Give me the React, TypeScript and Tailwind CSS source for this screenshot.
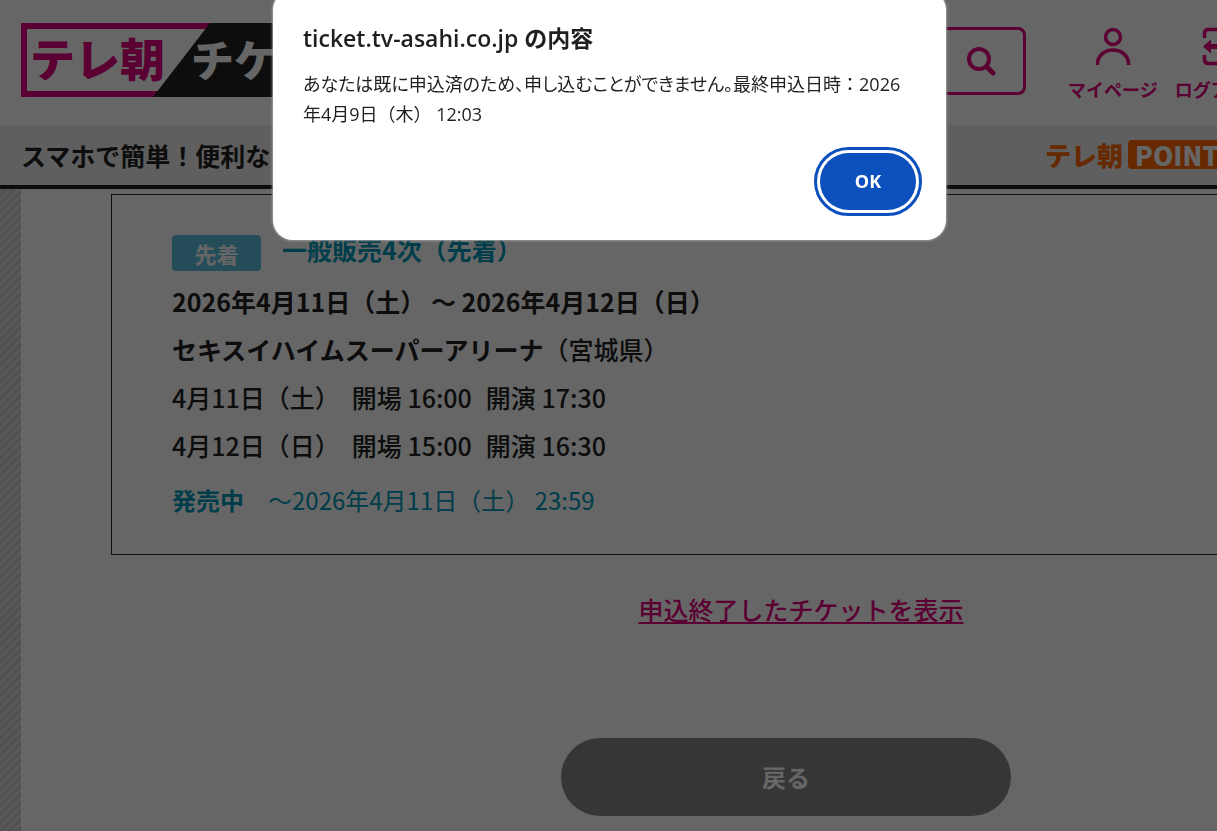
import React from 'react'

const schedules = [
  { day: '4月11日（土）', open: '16:00', start: '17:30' },
  { day: '4月12日（日）', open: '15:00', start: '16:30' },
]

function Logo() {
  return (
    <svg width="360" height="74" viewBox="0 0 360 74" role="img" aria-label="テレ朝チケット" className="shrink-0">
      <rect x="3" y="3" width="300" height="68" fill="#fff" stroke="#e4007f" strokeWidth="6" />
      <path d="M189 0H360V74H132Z" fill="#222" />
      <g fontFamily="'Noto Sans CJK JP', sans-serif" fontWeight="900">
        <text x="9" y="54" fontSize="45" fill="#e4007f">テレ朝</text>
        <text x="170" y="54" fontSize="43" fill="#fff">チケット</text>
      </g>
    </svg>
  )
}

function SearchIcon() {
  return (
    <svg width="30" height="30" viewBox="0 0 30 30" fill="none" stroke="#e4007f" strokeLinecap="round">
      <circle cx="12" cy="13" r="10" strokeWidth="4" />
      <path d="M20 21L26 27" strokeWidth="5" />
    </svg>
  )
}

function UserIcon() {
  return (
    <svg width="40" height="40" viewBox="0 0 40 40" fill="none" stroke="#e4007f" strokeWidth="3.500">
      <circle cx="20" cy="11" r="7.500" />
      <path d="M4.500 39V38C4.500 29.500 11.500 24 20 24S35.500 29.500 35.500 38V39" />
    </svg>
  )
}

function LogoutIcon() {
  return (
    <svg width="40" height="40" viewBox="0 0 40 40" fill="none" stroke="#e4007f" strokeWidth="3.500">
      <path d="M4.500 12V7.500Q4.500 3.500 8.500 3.500H31.500Q35.500 3.500 35.500 7.500V33.500Q35.500 37.500 31.500 37.500H8.500Q4.500 37.500 4.500 33.500V29" />
      <path d="M9 20.500H26" strokeWidth="5" />
      <path d="M3 20.500L11 13.500V27.500Z" fill="#e4007f" stroke="none" />
    </svg>
  )
}

function Header() {
  return (
    <header className="border-b-4 border-[#222] bg-white">
      <div className="flex h-[125px] items-start pl-[21px]">
        <div className="pt-[23px]"><Logo /></div>
        <form className="ml-[60px] mt-[27px] flex h-[68px] w-[585px] items-center rounded-lg border-3 border-[#e4007f] pr-[26px]">
          <input type="search" aria-label="チケットを検索" className="h-full min-w-0 flex-1 px-4 outline-none" />
          <button type="button" aria-label="検索"><SearchIcon /></button>
        </form>
        <nav className="ml-[42px] flex gap-[17px] pt-[26px] text-[18px] leading-6 font-bold text-[#e4007f]">
          <a href="#mypage" className="flex flex-col items-center gap-[11px]"><UserIcon />マイページ</a>
          <a href="#logout" className="flex flex-col items-center gap-[11px]"><LogoutIcon />ログアウト</a>
        </nav>
      </div>
      <div className="flex h-[60px] items-center bg-[#eee] pl-[21px]">
        <p className="w-[1024px] pt-px text-[25px] font-bold text-[#222]">スマホで簡単！便利な</p>
        <a href="#point" className="flex items-center gap-[5px] pb-[2px] text-[26px] leading-[29px] font-black text-[#ff6600]">
          テレ朝
          <span className="rounded-sm bg-[#ff6600] px-[7px] text-white">POINT</span>
        </a>
      </div>
    </header>
  )
}

function TicketBox() {
  return (
    <section className="mt-[5px] mx-[90px] border border-[#222] px-[60px] py-[30px] text-[25px] leading-[48px] font-medium text-[#222]">
      <div className="mb-1 flex items-start gap-[21px] font-bold">
        <span className="mt-[10px] w-[89px] rounded-sm bg-[#5bc0de] text-center text-[22px] leading-9 text-white">先着</span>
        <h2 className="text-[#0099b8]">一般販売4次（先着）</h2>
      </div>
      <p className="font-bold">2026年4月11日（土） ～ 2026年4月12日（日）</p>
      <p><b>セキスイハイムスーパーアリーナ</b>（宮城県）</p>
      {schedules.map((s) => (
        <p key={s.day} className="flex">
          <span className="mr-3">{s.day}</span>
          <span className="mr-3.5">開場 {s.open}</span>
          <span>開演 {s.start}</span>
        </p>
      ))}
      <p className="mt-[7px] text-[24px] font-normal text-[#0099b8]"><b className="mr-6">発売中</b>～2026年4月11日（土） 23:59</p>
    </section>
  )
}

function AlertDialog() {
  return (
    <div className="fixed inset-0 flex items-start justify-center bg-black/60 pl-[2px]">
      <div role="alertdialog" aria-modal="true" aria-labelledby="alert-title" aria-describedby="alert-text" className="-mt-[10px] flex w-[673px] flex-col rounded-[20px] bg-white p-[30px] font-['Open_Sans','Noto_Sans_CJK_JP',sans-serif] text-[#1f1f1f] shadow-[0_0_2px_1px_#999]">
        <h1 id="alert-title" className="pt-[3px] text-[23px] leading-[30px] font-semibold">ticket.tv-asahi.co.jp の内容</h1>
        <p id="alert-text" className="mt-4 text-[18px] leading-[30px]">
          <span className="[font-feature-settings:'palt']">あなたは既に申込済のため、申し込むことができません。</span>最終申込日時：2026年4月9日（木） 12:03
        </p>
        <button type="button" autoFocus className="mt-6 h-[57px] w-24 self-end rounded-full bg-[#0b50bd] text-[18px] font-bold text-white outline-3 outline-offset-3 outline-[#0b50bd]">OK</button>
      </div>
    </div>
  )
}

export default function App() {
  return (
    <div className="min-h-screen overflow-hidden bg-white font-['Noto_Sans_CJK_JP',sans-serif]" lang="ja">
      <div className="flex min-h-screen min-w-[1602px] flex-col">
        <Header />
        <div className="flex-1 bg-[repeating-linear-gradient(135deg,#dcdcdc_0px,#dcdcdc_3px,#cacaca_3px,#cacaca_6px)] px-[21px]">
          <main className="flex min-h-[642px] flex-col bg-white">
            <TicketBox />
            <a href="#closed" className="mt-[34px] self-center text-[25px] leading-10 font-medium text-[#e4007f] underline decoration-2 underline-offset-2">申込終了したチケットを表示</a>
            <button type="button" className="mt-[109px] mr-[30px] h-[78px] w-[450px] self-center rounded-full bg-[#888] text-[24px] font-bold text-white">戻る</button>
          </main>
        </div>
      </div>
      <AlertDialog />
    </div>
  )
}
